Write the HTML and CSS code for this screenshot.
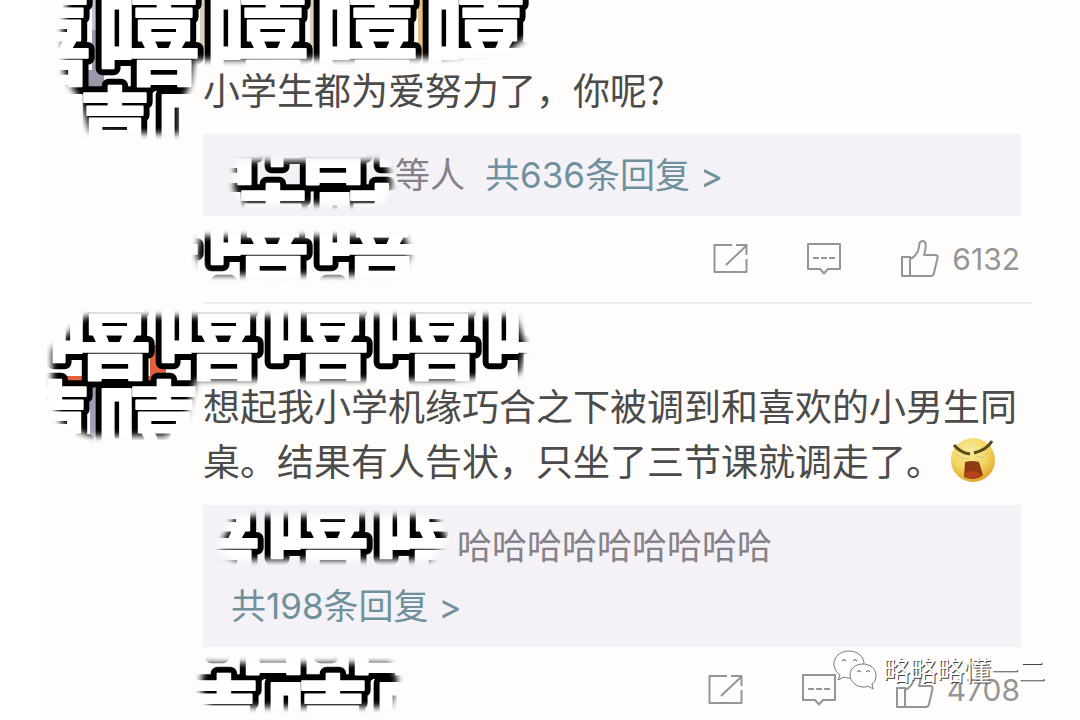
FILE: index.html
```html
<!DOCTYPE html>
<html lang="zh-CN">
<head>
    <meta charset="UTF-8">
    <meta name="viewport" content="width=device-width, initial-scale=1.0">
    <title>评论</title>
    <link rel="stylesheet" href="styles.css">
</head>
<body>
    <svg class="symbols" aria-hidden="true">
        <symbol id="share" viewBox="0 0 36 38">
            <path d="M20 5H2.500v27h32V19M24 5h10.500v10M14 25L34 6"/>
        </symbol>
        <symbol id="reply" viewBox="0 0 36 38">
            <path d="M2 4h32v25H22l-4 4.500-4-4.500H2z"/>
            <path d="M7 18h6m2 0h6m2 0h6"/>
        </symbol>
        <symbol id="like" viewBox="0 0 40 38">
            <path d="M2 17h8v19H2zM10 19c5-2 8-6 9-12 0-4 1-6 3.500-6 4 0 4 6 1.500 14h11c2 0 3 1 2.500 3L34 33c-.500 2-1 3-3 3H5"/>
        </symbol>
    </svg>

    <main class="feed">
        <article class="comment">
            <p class="text">小学生都为爱努力了，你呢?</p>
            <div class="quote">
                <p class="indent"><span class="who">等人</span><a href="#">共636条回复 &gt;</a></p>
            </div>
            <div class="actions">
                <button aria-label="转发"><svg class="icon"><use href="#share"/></svg></button>
                <button aria-label="评论"><svg class="icon"><use href="#reply"/></svg></button>
                <button class="like" aria-label="赞 6132"><svg class="icon thumb"><use href="#like"/></svg><span>6132</span></button>
            </div>
        </article>

        <article class="comment">
            <p class="text">想起我小学机缘巧合之下被调到和喜欢的小男生同桌。结果有人告状，只坐了三节课就调走了。<svg class="emoji" viewBox="0 0 48 48" aria-label="怒骂">
                <defs>
                    <radialGradient id="face" cx="42%" cy="30%" r="70%">
                        <stop offset="0" stop-color="#f5eda0"/>
                        <stop offset="0.6" stop-color="#f2d661"/>
                        <stop offset="1" stop-color="#e2a62e"/>
                    </radialGradient>
                </defs>
                <circle cx="24" cy="24" r="22" fill="url(#face)"/>
                <path d="M5 9c4 5 9 8 16 9M43 5c-4 7-10 10-18 12" fill="none" stroke="#5a4a1c" stroke-width="3"/>
                <path d="M8 18c3 5 9 6 13 3M28 20c4 3 9 1 11-4" fill="none" stroke="#cfc28a" stroke-width="1"/>
                <path d="M16 26q7-2 14 0l4 13q-8 7-19 2z" fill="#8f3c14"/>
                <path d="M17 37q6-4 13 0l2 3q-8 4-16 0z" fill="#b8441c"/>
            </svg></p>
            <div class="quote">
                <p class="indent haha">哈哈哈哈哈哈哈哈哈</p>
                <p><a href="#">共198条回复 &gt;</a></p>
            </div>
            <div class="actions">
                <button aria-label="转发"><svg class="icon"><use href="#share"/></svg></button>
                <button aria-label="评论"><svg class="icon"><use href="#reply"/></svg></button>
                <button class="like" aria-label="赞 4708"><svg class="icon thumb"><use href="#like"/></svg><span>4708</span></button>
            </div>
        </article>
    </main>

    <!-- brushed-on stickers that hide the names and avatars -->
    <svg class="mosaic" viewBox="0 0 560 720">
        <defs>
            <filter id="soft"><feGaussianBlur stdDeviation="3"/></filter>
            <mask id="brush" maskUnits="userSpaceOnUse" x="0" y="-20" width="560" height="760">
                <g fill="#fff" filter="url(#soft)">
                    <path d="M72-20L62 30L64 75L80 100L90 132L180 134L180 105L190 85L194 60L440 58L510 50L536 30L540-20z"/>
                    <path d="M236 161H386L392 185L382 204H245L234 190z"/>
                    <path d="M200 236H405L410 255L400 275H206L196 255z"/>
                    <path d="M85 316H515L526 345L520 373L450 380H196L185 420L165 436H90L62 425L52 400L52 350z"/>
                    <path d="M235 516H435L448 540L430 560H235L218 550z"/>
                    <path d="M204 663H390L398 680L390 707H210L200 690z"/>
                </g>
            </mask>
        </defs>
        <g mask="url(#brush)">
            <path d="M92 0H104V30H92z" fill="#c9c4d2"/>
            <path d="M92 30H104V92H70V70H92z" fill="#9a98ad"/>
            <path d="M200 0H214V56H200zM310 0H324V56H310z" fill="#dccfbd"/>
            <path d="M418 0H432V56H418z" fill="#e6c17f"/>
            <path d="M66 376H92V386H66zM150 345H166V386H90V376H150z" fill="#e2603a"/>
            <path d="M90 386H106V438H90z" fill="#a19db3"/>
            <use class="edge" href="#stamps"/>
            <use class="face" href="#stamps"/>
            <g id="stamps">
                <text x="-13 96 205 314 423" y="77">嘻嘻嘻嘻嘻</text>
                <text x="47 156 265 374" y="175">嘻嘻嘻嘻</text>
                <text x="96 205 314" y="273">嘻嘻嘻</text>
                <text x="47 156 265 374 483" y="371">嘻嘻嘻嘻嘻</text>
                <text x="-13 96" y="469">嘻嘻</text>
                <text x="156 265 374" y="567">嘻嘻嘻</text>
                <text x="205 314" y="665">嘻嘻</text>
                <text x="156 265 374" y="763">嘻嘻嘻</text>
            </g>
        </g>
    </svg>

    <div class="watermark">
        <svg viewBox="0 0 44 40" aria-hidden="true">
            <path d="M16 1C7 1 1 7 1 14c0 4 2 8 6 11l-2 5 6-3c2 1 4 1 6 1C26 28 31 21 31 14 31 7 25 1 16 1z"/>
            <path d="M30 14c-8 0-13 5-13 11s6 12 13 12c2 0 4 0 5-1l5 3-1-5c3-2 4-5 4-9 0-6-6-11-13-11z"/>
            <path class="eyes" d="M9 11q2-3 4 0M20 11q2-3 4 0M24 22q2-3 4 0M33 22q2-3 4 0"/>
        </svg>
        <span>略略略懂一二</span>
    </div>
</body>
</html>
```

FILE: styles.css
```css
:root {
    --page: #fefdfc;
    --quote: #f4f2f7;
    --ink: #4b4b4b;
    --link: #6f919d;
    --muted: #959595;
}

* {
    margin: 0;
    padding: 0;
    box-sizing: border-box;
}

body {
    position: relative;
    min-height: 100vh;
    background: #fff;
    color: var(--ink);
    font-family: Inter, "Noto Sans CJK SC", sans-serif;
    overflow-x: hidden;
}

.symbols {
    position: absolute;
    width: 0;
    height: 0;
}

.feed {
    margin-left: 47px;
    padding: 0 47px 0 156px;
    background: var(--page);
}

.comment {
    padding-top: 74px;
}

.comment:first-child {
    padding-top: 62px;
    border-bottom: 2px solid #eeedee;
}

.text {
    font-family: "Noto Sans CJK SC", sans-serif;
    font-size: 37px;
    line-height: 55px;
}

.emoji {
    width: 48px;
    height: 48px;
    margin: -12px 0 0 6px;
    vertical-align: middle;
}

.quote {
    margin: 17px 12px 0 0;
    padding: 11px 28px;
    background: var(--quote);
    font-size: 35px;
    line-height: 60px;
}

.quote p {
    height: 60px;
    white-space: nowrap;
}

.quote .indent {
    padding-left: 164px;
    color: #858188;
}

.quote .haha {
    padding-left: 226px;
}

.who {
    margin-right: 20px;
}

.quote a {
    color: var(--link);
    text-decoration: none;
}

.actions {
    display: flex;
    justify-content: flex-end;
    align-items: center;
    gap: 58px;
    height: 86px;
    padding-right: 13px;
}

.actions button {
    display: flex;
    align-items: center;
    gap: 12px;
    border: 0;
    background: none;
    color: var(--muted);
    font-family: Inter, sans-serif;
    font-size: 30px;
    cursor: pointer;
}

.icon {
    width: 36px;
    height: 38px;
    fill: none;
    stroke: var(--muted);
    stroke-width: 2;
    stroke-linejoin: round;
}

.thumb {
    width: 40px;
}

.mosaic {
    position: absolute;
    top: 0;
    left: 0;
    width: 560px;
    height: 720px;
    fill: #fff;
    stroke-linejoin: round;
    pointer-events: none;
}

.mosaic text {
    font-family: "Noto Sans CJK SC", sans-serif;
    font-size: 104px;
    font-weight: 700;
}

.edge {
    fill: #000;
    stroke: #000;
    stroke-width: 14px;
}

.face {
    stroke: #fff;
    stroke-width: 2px;
}

.watermark {
    position: absolute;
    top: 650px;
    right: 35px;
    display: flex;
    align-items: center;
    gap: 6px;
    color: #fff;
    font-family: "Noto Sans CJK SC", sans-serif;
    font-size: 27px;
    line-height: 40px;
    text-shadow: 1px 1px 0 #444;
}

.watermark svg {
    width: 44px;
    height: 40px;
    fill: #fff;
    stroke: #777;
    stroke-width: 1;
}

.watermark .eyes {
    fill: none;
    stroke: #555;
}
```
